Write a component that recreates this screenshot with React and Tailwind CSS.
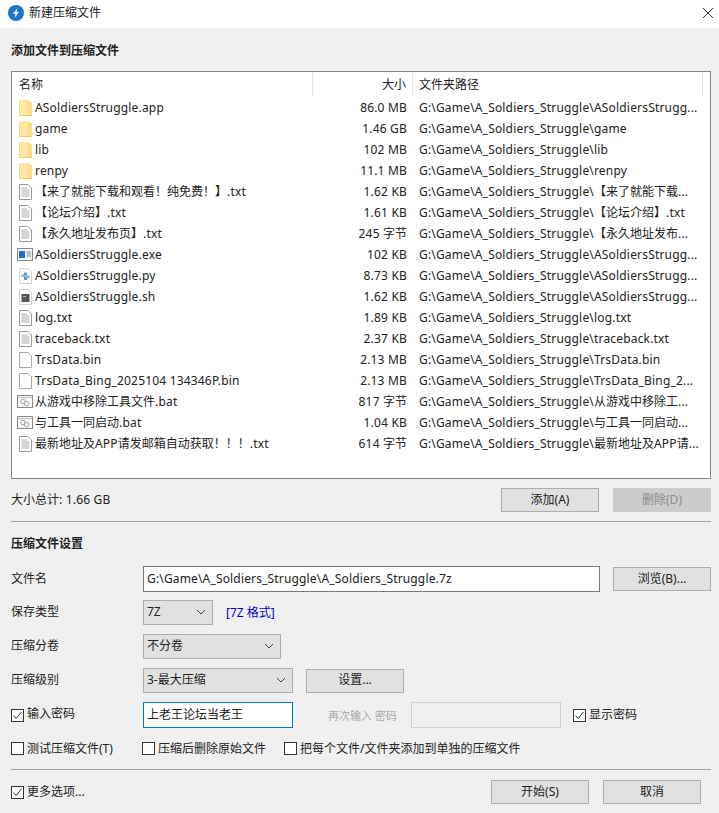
import React from "react";

const font = "font-['Noto_Sans','Noto_Sans_CJK_SC',sans-serif]";

function Folder() {
  return (
    <svg width="13" height="16" viewBox="0 0 13 16" className="shrink-0">
      <path d="M0 0H8.5L13 2.5V16H0Z" fill="#ffe9a4" />
      <path d="M0.5 0.5V15.5H12.5" fill="none" stroke="#f1d68e" />
      <path d="M8.5 0L13 2.5V16H8.5Z" fill="#fcdc86" />
      <path d="M0 15.5H13" stroke="#eccb6d" />
    </svg>
  );
}

function TextFile() {
  return (
    <svg width="13" height="16" viewBox="0 0 13 16" className="shrink-0">
      <path d="M0.5 0.5H9L12.5 4V15.5H0.5Z" fill="#fff" stroke="#9a9a9a" />
      <path d="M2.5 4H8M2.5 6H10.5M2.5 8H10.5M2.5 10H10.5M2.5 12H10.5" stroke="#a3a3a3" strokeWidth="0.9" />
    </svg>
  );
}

function BlankFile() {
  return (
    <svg width="13" height="16" viewBox="0 0 13 16" className="shrink-0">
      <path d="M0.5 0.5H9L12.5 4V15.5H0.5Z" fill="#fff" stroke="#a8a8a8" />
    </svg>
  );
}

function ExeFile() {
  return (
    <svg width="16" height="13" viewBox="0 0 16 13" className="shrink-0 -ml-[2px]">
      <rect x="0.5" y="0.5" width="15" height="12" fill="#f4f4f4" stroke="#8a8a8a" />
      <rect x="2" y="3" width="6" height="7" fill="#1f6fc4" />
      <path d="M9.5 4H14M9.5 6H14M9.5 8H14" stroke="#8a8a8a" />
    </svg>
  );
}

function PyFile() {
  return (
    <svg width="13" height="16" viewBox="0 0 13 16" className="shrink-0">
      <path d="M0.5 0.5H9L12.5 4V15.5H0.5Z" fill="#fff" stroke="#d2d2d2" />
      <path d="M5 4.5H8V7.5H10.5V10H8V12H5V9H2.5V6.5H5Z" fill="#5a9bc9" />
      <path d="M3 8H10" stroke="#dcebf5" strokeWidth="0.7" />
    </svg>
  );
}

function ShFile() {
  return (
    <svg width="13" height="16" viewBox="0 0 13 16" className="shrink-0">
      <path d="M0.5 0.5H9L12.5 4V15.5H0.5Z" fill="#fff" stroke="#d2d2d2" />
      <rect x="2.5" y="5" width="8" height="8" fill="#555" />
      <path d="M4 7.5H7" stroke="#bdbdbd" />
    </svg>
  );
}

function BatFile() {
  return (
    <svg width="16" height="13" viewBox="0 0 16 13" className="shrink-0 -ml-[2px]">
      <rect x="0.5" y="0.5" width="15" height="12" fill="#f6f6f6" stroke="#8a8a8a" />
      <path d="M1 2.5H15" stroke="#c0c0c0" />
      <circle cx="6" cy="6.5" r="2.3" fill="none" stroke="#a5a5a5" />
      <circle cx="9.5" cy="8.5" r="2.3" fill="none" stroke="#a5a5a5" />
    </svg>
  );
}

// latin runs sit a bit wider than Noto Sans in the picture, CJK keeps its 12px cell
function Txt({ children }) {
  return children.split(/([\x00-\x7f]+)/).map((part, i) =>
    i % 2 === 1 ? (
      <span key={i} className="tracking-[0.18px]">
        {part}
      </span>
    ) : (
      part
    ),
  );
}

const dir = "G:\\Game\\A_Soldiers_Struggle\\";

const files = [
  { icon: <Folder />, name: "ASoldiersStruggle.app", size: "86.0 MB", path: dir + "ASoldiersStrugg..." },
  { icon: <Folder />, name: "game", size: "1.46 GB", path: dir + "game" },
  { icon: <Folder />, name: "lib", size: "102 MB", path: dir + "lib" },
  { icon: <Folder />, name: "renpy", size: "11.1 MB", path: dir + "renpy" },
  { icon: <TextFile />, name: "【来了就能下载和观看！纯免费！】.txt", size: "1.62 KB", path: dir + "【来了就能下载..." },
  { icon: <TextFile />, name: "【论坛介绍】.txt", size: "1.61 KB", path: dir + "【论坛介绍】.txt" },
  { icon: <TextFile />, name: "【永久地址发布页】.txt", size: "245 字节", path: dir + "【永久地址发布..." },
  { icon: <ExeFile />, name: "ASoldiersStruggle.exe", size: "102 KB", path: dir + "ASoldiersStrugg..." },
  { icon: <PyFile />, name: "ASoldiersStruggle.py", size: "8.73 KB", path: dir + "ASoldiersStrugg..." },
  { icon: <ShFile />, name: "ASoldiersStruggle.sh", size: "1.62 KB", path: dir + "ASoldiersStrugg..." },
  { icon: <TextFile />, name: "log.txt", size: "1.89 KB", path: dir + "log.txt" },
  { icon: <TextFile />, name: "traceback.txt", size: "2.37 KB", path: dir + "traceback.txt" },
  { icon: <BlankFile />, name: "TrsData.bin", size: "2.13 MB", path: dir + "TrsData.bin" },
  { icon: <BlankFile />, name: "TrsData_Bing_2025104 134346P.bin", size: "2.13 MB", path: dir + "TrsData_Bing_2..." },
  { icon: <BatFile />, name: "从游戏中移除工具文件.bat", size: "817 字节", path: dir + "从游戏中移除工..." },
  { icon: <BatFile />, name: "与工具一同启动.bat", size: "1.04 KB", path: dir + "与工具一同启动..." },
  { icon: <TextFile />, name: "最新地址及APP请发邮箱自动获取！！！.txt", size: "614 字节", path: dir + "最新地址及APP请..." },
];

function Button({ children, disabled, className = "" }) {
  return (
    <div
      className={`flex items-center justify-center w-[98px] h-6 border ${
        disabled
          ? "bg-[#cccccc] border-[#cccccc] text-[#8c8c8c]"
          : "bg-[#e1e1e1] border-[#adadad] text-[#222]"
      } ${className}`}
    >
      {children}
    </div>
  );
}

function Select({ value, className = "" }) {
  return (
    <div className={`flex items-center justify-between h-[25px] pl-[3px] pr-[6px] pb-px bg-[#e1e1e1] border border-[#adadad] ${className}`}>
      <span>{value}</span>
      <svg width="10" height="6" viewBox="0 0 10 6">
        <path d="M1 1L5 5L9 1" fill="none" stroke="#444" />
      </svg>
    </div>
  );
}

function Checkbox({ checked, label, className = "" }) {
  return (
    <div className={`flex items-center gap-[3px] ${className}`}>
      <div className="flex items-center justify-center w-[13px] h-[13px] bg-white border border-[#333]">
        {checked && (
          <svg width="11" height="11" viewBox="0 0 11 11">
            <path d="M1.5 5.5L4.2 8.5L9.5 1.8" fill="none" stroke="#333" />
          </svg>
        )}
      </div>
      <span>{label}</span>
    </div>
  );
}

function Row({ label, children, className = "" }) {
  return (
    <div className={`flex items-center ${className}`}>
      <span className="w-[132px] shrink-0 pb-px">{label}</span>
      {children}
    </div>
  );
}

export default function App() {
  return (
    <div className={`w-[719px] h-[813px] flex flex-col bg-[#f0f0f0] text-[12px] leading-none text-[#222] overflow-hidden ${font}`}>
      {/* Title bar */}
      <div className="h-7 shrink-0 flex items-center bg-white pl-2 pr-[5px] pb-[3px]">
        <svg width="16" height="16" viewBox="0 0 16 16" className="shrink-0">
          <circle cx="8" cy="8" r="8" fill="#1a78c8" />
          <path d="M9.5 3L5 9H7.5L6.5 13L11 7H8.5Z" fill="#fff" />
        </svg>
        <span className="ml-[5px]">新建压缩文件</span>
        <svg width="10" height="10" viewBox="0 0 10 10" className="ml-auto mr-[1px]">
          <path d="M0 0L10 10M10 0L0 10" stroke="#333" />
        </svg>
      </div>

      <div className="flex-1 flex flex-col px-[11px] pr-2">
        <div className="h-[15px] mt-[15px] font-bold flex items-center">添加文件到压缩文件</div>

        {/* File list */}
        <div className="mt-[13px] h-[408px] bg-white border border-[#828790] flex flex-col">
          <div className="h-[25px] flex items-center shrink-0">
            <div className="w-[301px] h-full pl-[7px] flex items-center border-r border-[#e5e5e5]">名称</div>
            <div className="w-[100px] h-full pr-[6px] flex items-center justify-end border-r border-[#e5e5e5]">大小</div>
            <div className="w-[290px] h-full pl-[6px] flex items-center border-r border-[#e5e5e5]">文件夹路径</div>
          </div>
          {files.map((file) => (
            <div key={file.name} className="h-[21px] shrink-0 flex items-center">
              <div className="w-[301px] pl-[7px] flex items-center whitespace-nowrap">
                <span className="w-[16px] shrink-0 flex justify-start">{file.icon}</span>
                <span>
                  <Txt>{file.name}</Txt>
                </span>
              </div>
              <div className="w-[100px] pr-[6px] text-right whitespace-nowrap">
                <Txt>{file.size}</Txt>
              </div>
              <div className="pl-[6px] whitespace-nowrap">
                <Txt>{file.path}</Txt>
              </div>
            </div>
          ))}
        </div>

        <div className="mt-[9px] flex items-center justify-between">
          <span>
            <Txt>大小总计: 1.66 GB</Txt>
          </span>
          <div className="flex gap-[14px]">
            <Button>添加(A)</Button>
            <Button disabled>删除(D)</Button>
          </div>
        </div>

        <div className="mt-[9px] h-px bg-[#a0a0a0]" />

        <div className="mt-[14px] h-[15px] font-bold flex items-center">压缩文件设置</div>

        <Row label="文件名" className="mt-[15px]">
          <div className="w-[457px] h-[26px] px-[3px] pb-px flex items-center bg-white border border-[#7a7a7a] whitespace-nowrap tracking-[0.16px]">
            G:\Game\A_Soldiers_Struggle\A_Soldiers_Struggle.7z
          </div>
          <Button className="ml-[13px]">浏览(B)...</Button>
        </Row>

        <Row label="保存类型" className="mt-2">
          <Select value="7Z" className="w-[70px]" />
          <span className="ml-[13px] text-[#0000cc]">[7Z 格式]</span>
        </Row>

        <Row label="压缩分卷" className="mt-[9px]">
          <Select value="不分卷" className="w-[138px]" />
        </Row>

        <Row label="压缩级别" className="mt-[9px]">
          <Select value="3-最大压缩" className="w-[150px]" />
          <Button className="ml-[13px] pb-px">设置...</Button>
        </Row>

        <div className="mt-[9px] flex items-center">
          <Checkbox checked label="输入密码" className="w-[132px] [&>span]:-translate-y-px" />
          <div className="w-[150px] h-[26px] px-[3px] pb-px flex items-center bg-white border border-[#0078d7]">上老王论坛当老王</div>
          <span className="ml-[35px] w-[83px] text-[11px] text-[#a8a8a8]">再次输入 密码</span>
          <div className="w-[150px] h-[26px] bg-[#f0f0f0] border border-[#d0d0d0]" />
          <Checkbox checked label="显示密码" className="ml-3" />
        </div>

        <div className="mt-[14px] flex items-center">
          <Checkbox label="测试压缩文件(T)" className="w-[131px]" />
          <Checkbox label="压缩后删除原始文件" className="w-[142px]" />
          <Checkbox label="把每个文件/文件夹添加到单独的压缩文件" />
        </div>

        <div className="mt-[14px] h-px bg-[#a0a0a0]" />

        <div className="mt-[10px] flex items-center">
          <Checkbox checked label="更多选项..." />
          <div className="ml-auto flex gap-[14px] mr-[10px]">
            <Button>开始(S)</Button>
            <Button>取消</Button>
          </div>
        </div>
      </div>
    </div>
  );
}
